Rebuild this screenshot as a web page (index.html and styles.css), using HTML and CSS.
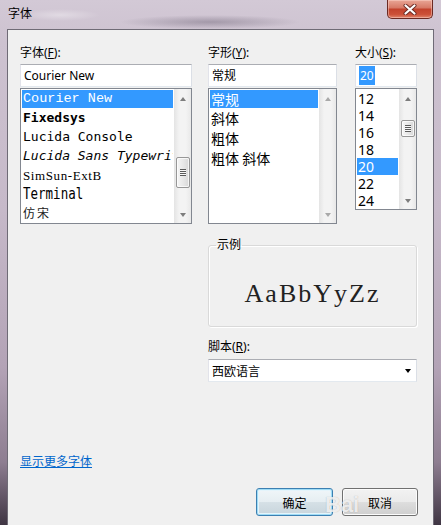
FILE: index.html
```html
<!DOCTYPE html>
<html lang="zh-CN">
<head>
  <meta charset="UTF-8">
  <meta name="viewport" content="width=device-width, initial-scale=1.0">
  <title>字体</title>
  <link rel="stylesheet" href="styles.css">
</head>
<body>

  <div class="window">
    <div class="titlebar">
      <div class="title">字体</div>
      <div class="close-btn">
        <svg width="14" height="11" viewBox="0 0 14 11">
          <path d="M2.5 1.5 L11.5 9.5 M11.5 1.5 L2.5 9.5" stroke="#6b2a23" stroke-width="4" stroke-linecap="round"/>
          <path d="M2.5 1.5 L11.5 9.5 M11.5 1.5 L2.5 9.5" stroke="#fff" stroke-width="2.2" stroke-linecap="round"/>
        </svg>
      </div>
    </div>

    <div class="client">
      <div class="pickers">
        <div class="picker picker-face">
          <div class="label">字体(<u>F</u>):</div>
          <div class="textbox">Courier New</div>
          <div class="listbox">
            <div class="items face-items">
              <div class="item selected f-courier">Courier New</div>
              <div class="item f-fixedsys">Fixedsys</div>
              <div class="item f-console">Lucida Console</div>
              <div class="item f-typewriter">Lucida Sans Typewriter</div>
              <div class="item f-simsun">SimSun-ExtB</div>
              <div class="item f-terminal"><span>Terminal</span></div>
              <div class="item f-fangsong">仿宋</div>
            </div>
            <div class="vscroll">
              <span class="arrow-box"><span class="arrow up"></span></span>
              <span class="track"><span class="thumb face-thumb"><span class="grip"></span></span></span>
              <span class="arrow-box"><span class="arrow down"></span></span>
            </div>
          </div>
        </div>

        <div class="picker picker-style">
          <div class="label">字形(<u>Y</u>):</div>
          <div class="textbox">常规</div>
          <div class="listbox">
            <div class="items style-items">
              <div class="item selected">常规</div>
              <div class="item">斜体</div>
              <div class="item">粗体</div>
              <div class="item">粗体 斜体</div>
            </div>
            <div class="vscroll">
              <span class="arrow-box"><span class="arrow up disabled"></span></span>
              <span class="track"></span>
              <span class="arrow-box"><span class="arrow down disabled"></span></span>
            </div>
          </div>
        </div>

        <div class="picker picker-size">
          <div class="label">大小(<u>S</u>):</div>
          <div class="textbox"><span class="highlight">20</span></div>
          <div class="listbox short">
            <div class="items size-items">
              <div class="item">12</div>
              <div class="item">14</div>
              <div class="item">16</div>
              <div class="item">18</div>
              <div class="item selected">20</div>
              <div class="item">22</div>
              <div class="item">24</div>
            </div>
            <div class="vscroll">
              <span class="arrow-box"><span class="arrow up"></span></span>
              <span class="track"><span class="thumb size-thumb"><span class="grip"></span></span></span>
              <span class="arrow-box"><span class="arrow down"></span></span>
            </div>
          </div>
        </div>
      </div>

      <div class="lower">
        <fieldset class="sample-group">
          <legend>示例</legend>
          <div class="sample">AaBbYyZz</div>
        </fieldset>
        <div class="label script-label">脚本(<u>R</u>):</div>
        <div class="select">
          <span>西欧语言</span>
          <span class="select-arrow"></span>
        </div>
      </div>

      <a class="more-link" href="#">显示更多字体</a>

      <div class="buttons">
        <button class="btn default">确定</button>
        <button class="btn">取消</button>
      </div>

      <div class="watermark">Bai</div>
    </div>
  </div>

</body>
</html>
```

FILE: styles.css
```css
body {
  margin: 0;
  background: #4a4150;
  font-family: "Noto Sans", "Noto Sans CJK SC", sans-serif;
  font-size: 12px;
  color: #000;
}
.window {
  width: 441px;
  height: 525px;
  display: flex;
  flex-direction: column;
  overflow: hidden;
  background: linear-gradient(180deg, #d3c9d6 0%, #cdc2d0 8%, #c6b9c9 40%, #b3a3b6 70%, #8e7e91 88%, #3f3543 100%);
}
.titlebar {
  height: 29px;
  flex-shrink: 0;
  display: flex;
  justify-content: space-between;
  align-items: flex-start;
  padding-left: 8px;
  box-sizing: border-box;
  background: radial-gradient(ellipse 90px 7px at 210px 22px, rgba(80, 70, 90, 0.35), transparent),
              radial-gradient(ellipse 40px 6px at 60px 15px, rgba(255, 255, 255, 0.35), transparent);
}
.title {
  margin-top: 6px;
  line-height: 16px;
}
.close-btn {
  width: 46px;
  height: 19px;
  margin-right: 8px;
  box-sizing: border-box;
  border: 1px solid #6b2a23;
  border-top: none;
  border-radius: 0 0 5px 5px;
  background: linear-gradient(180deg, #e9a696 0%, #d77b68 42%, #c3432d 52%, #cc5138 80%, #e0866d 100%);
  box-shadow: inset 0 0 0 1px rgba(255, 220, 210, 0.45);
  display: flex;
  align-items: center;
  justify-content: center;
}
.client {
  flex: 1;
  margin: 0 7px;
  border: 1px solid #6f6b76;
  border-bottom: none;
  background: #f0f0f0;
  position: relative;
}

/* three pickers */
.pickers {
  display: flex;
  padding: 15px 0 0 12px;
}
.picker-face { width: 172px; }
.picker-style { width: 129px; margin-left: 16px; }
.picker-size { width: 62px; margin-left: 18px; }
.label {
  height: 16px;
  line-height: 16px;
  margin-bottom: 3px;
  white-space: nowrap;
}
.label u {
  text-underline-offset: 1px;
}
.textbox {
  height: 23px;
  box-sizing: border-box;
  border: 1px solid;
  border-color: #abadb3 #dbdfe6 #e3e9ef #e2e3ea;
  background: #fff;
  padding: 0 3px;
  line-height: 21px;
  white-space: nowrap;
  overflow: hidden;
}
.highlight {
  background: #3399ff;
  color: #fff;
  padding: 1px 1px;
}
.listbox {
  margin-top: 1px;
  height: 136px;
  box-sizing: border-box;
  border: 1px solid #828790;
  background: #fff;
  display: flex;
}
.listbox.short {
  height: 122px;
}
.items {
  flex: 1;
  min-width: 0;
  padding: 1px;
  overflow: hidden;
}
.item {
  white-space: nowrap;
  overflow: hidden;
  padding-left: 1px;
}
.item.selected {
  background: #3399ff;
  color: #fff;
}

.face-items .item {
  height: 19px;
  line-height: 19px;
  font-size: 13px;
}
.face-items .f-courier {
  height: 18px;
  line-height: 18px;
  font-family: "Liberation Mono", monospace;
  font-size: 13.5px;
}
.f-fixedsys {
  font-family: "DejaVu Sans Mono", monospace;
  font-weight: bold;
}
.f-console {
  font-family: "DejaVu Sans Mono", monospace;
}
.face-items .f-typewriter {
  height: 20px;
  line-height: 20px;
  font-family: "DejaVu Sans Mono", monospace;
  font-style: italic;
}
.face-items .f-simsun {
  font-family: "Liberation Serif", serif;
  font-size: 13px;
  letter-spacing: 0.6px;
}
.face-items .f-terminal {
  height: 17px;
  line-height: 17px;
  font-family: "DejaVu Sans Mono", monospace;
  font-size: 12.5px;
}
.f-terminal span {
  display: inline-block;
  transform: scale(1, 1.3);
  transform-origin: left center;
}
.face-items .f-fangsong {
  height: 21px;
  line-height: 21px;
  font-family: "Noto Sans CJK SC", sans-serif;
  font-size: 12px;
  letter-spacing: 2px;
  color: #222;
}

.style-items .item {
  height: 20px;
  line-height: 20px;
  font-size: 14px;
  font-family: "Noto Sans CJK SC", sans-serif;
}
.style-items .item:first-child {
  height: 18px;
  line-height: 18px;
}
.size-items .item {
  height: 17px;
  line-height: 17px;
  font-size: 14px;
}

/* scroll bars */
.vscroll {
  width: 17px;
  flex-shrink: 0;
  display: flex;
  flex-direction: column;
  background: linear-gradient(90deg, #e4e4e4, #f3f3f3 30%, #f3f3f3 70%, #e8e8e8);
}
.arrow-box {
  height: 17px;
  flex-shrink: 0;
  display: flex;
  align-items: center;
  justify-content: center;
}
.arrow {
  width: 0;
  height: 0;
  border-left: 3.5px solid transparent;
  border-right: 3.5px solid transparent;
}
.arrow.up {
  border-bottom: 4px solid #7d7d7d;
  margin-top: 3px;
}
.arrow.down {
  border-top: 4px solid #7d7d7d;
}
.arrow.up.disabled { border-bottom-color: #a9a9a9; }
.arrow.down.disabled { border-top-color: #a9a9a9; }
.track {
  flex: 1;
  display: flex;
  flex-direction: column;
  align-items: center;
}
.thumb {
  width: 14px;
  box-sizing: border-box;
  border: 1px solid #979797;
  border-radius: 2px;
  background: linear-gradient(90deg, #f6f6f6, #e8e8e8 50%, #d8d8d8);
  box-shadow: inset 0 0 0 1px rgba(255, 255, 255, 0.7);
  display: flex;
  align-items: center;
  justify-content: center;
}
.face-thumb {
  margin-top: 51px;
  height: 31px;
}
.size-thumb {
  margin-top: 14px;
  height: 17px;
}
.grip {
  width: 6px;
  height: 7px;
  background: repeating-linear-gradient(180deg, #5a5a5a 0, #5a5a5a 1px, #f8f8f8 1px, #f8f8f8 2px);
}

/* sample and script */
.lower {
  width: 209px;
  margin: 13px 0 0 200px;
}
.sample-group {
  margin: 0;
  padding: 0;
  border: 1px solid #d9d9d9;
  border-radius: 3px;
  box-shadow: inset 1px 1px 0 #fff, 1px 1px 0 #fff;
}
.sample-group legend {
  margin-left: 7px;
  padding: 0 1px;
  line-height: 16px;
}
.sample {
  height: 73px;
  box-sizing: border-box;
  padding-top: 26px;
  text-align: center;
  font-family: "Liberation Serif", serif;
  font-size: 26px;
  letter-spacing: 2px;
  line-height: 30px;
  color: #222;
}
.script-label {
  margin-top: 12px;
  margin-bottom: 4px;
}
.select {
  height: 23px;
  box-sizing: border-box;
  border: 1px solid #abadb3;
  border-color: #abadb3 #dbdfe6 #e3e9ef #e2e3ea;
  background: #fff;
  display: flex;
  align-items: center;
  justify-content: space-between;
  padding: 0 4px 0 3px;
}
.select-arrow {
  width: 0;
  height: 0;
  border-left: 3.5px solid transparent;
  border-right: 3.5px solid transparent;
  border-top: 4px solid #000;
  margin-right: 1px;
}

.more-link {
  display: inline-block;
  margin: 72px 0 0 12px;
  line-height: 16px;
  color: #0066cc;
  text-decoration: underline;
}
.buttons {
  display: flex;
  justify-content: flex-end;
  gap: 9px;
  margin-top: 18px;
  padding-right: 15px;
}
.btn {
  width: 76px;
  height: 28px;
  box-sizing: border-box;
  border: 1px solid #707070;
  border-radius: 3px;
  background: linear-gradient(180deg, #f2f2f2 0%, #ebebeb 48%, #dddddd 52%, #cfcfcf 100%);
  box-shadow: inset 0 0 0 1px #fcfcfc;
  font-family: "Noto Sans CJK SC", sans-serif;
  font-size: 12px;
  color: #000;
  padding: 0;
}
.btn.default {
  width: 77px;
  border-color: #3c7fb1;
  box-shadow: inset 0 0 0 1px #9fdcf6, inset 0 0 0 2px #e4f4fb;
  background: linear-gradient(180deg, #f0f6f9 0%, #e6eef2 48%, #d5e0e6 52%, #c8d5dc 100%);
}
.watermark {
  position: absolute;
  left: 317px;
  top: 462px;
  font-family: "Liberation Sans", sans-serif;
  font-weight: bold;
  font-size: 22px;
  color: rgba(255, 255, 255, 0.8);
  text-shadow: 0 0 1px rgba(90, 90, 90, 0.45);
  pointer-events: none;
  white-space: nowrap;
}
```
